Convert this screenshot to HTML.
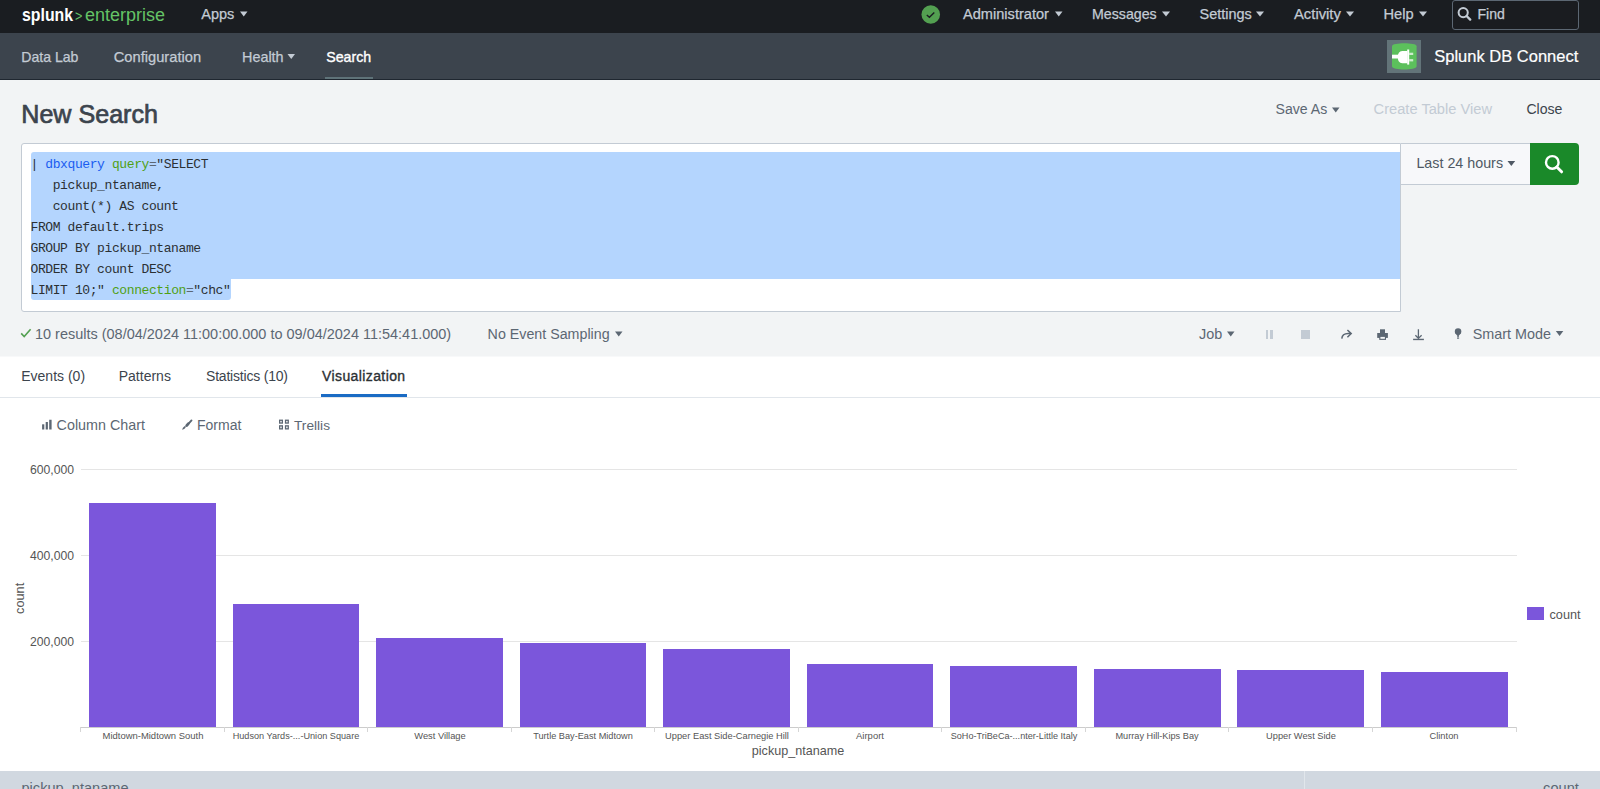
<!DOCTYPE html>
<html><head><meta charset="utf-8"><title>Splunk DB Connect - New Search</title>
<style>
html,body{margin:0;padding:0;width:1600px;height:789px;overflow:hidden;background:#ffffff;}
body{position:relative;font-family:"Liberation Sans",sans-serif;}
.t{position:absolute;white-space:pre;line-height:1;}
.r{position:absolute;}
.mono{font-family:"Liberation Mono",monospace;}
svg.r{display:block;overflow:visible}
</style></head><body>
<div class="r" style="left:0px;top:0px;width:1600px;height:33px;background:#1a1d21;"></div>
<div class="t" style="left:22.00px;top:5.76px;font-size:18px;color:#ffffff;font-weight:bold;transform:scaleX(0.88);transform-origin:0 0;">splunk</div>
<div class="t" style="left:74.80px;top:8.75px;font-size:14px;color:#65c466;transform:scaleX(0.9);transform-origin:0 0;">&gt;</div>
<div class="t" style="left:85.00px;top:6.69px;font-size:17.5px;color:#65c466;transform:scaleX(1.028);transform-origin:0 0;">enterprise</div>
<div class="t" style="left:201.25px;top:7.13px;font-size:14.5px;color:#c3cbd4;-webkit-text-stroke:0.25px #c3cbd4;">Apps</div>
<svg class="r" style="left:0;top:0" width="1" height="1"><polygon points="240,11.5 247.5,11.5 243.75,16.5" fill="#c3cbd4"/></svg>
<svg class="r" style="left:921px;top:4.5px" width="20" height="20" viewBox="0 0 20 20"><circle cx="9.75" cy="9.5" r="9.3" fill="#53a051"/><path d="M5.8 9.9 L8.4 12.3 L13.3 7.4" fill="none" stroke="#1a1d21" stroke-width="1.4"/></svg>
<div class="t" style="left:963.00px;top:7.04px;font-size:14.6px;color:#c3cbd4;-webkit-text-stroke:0.25px #c3cbd4;">Administrator</div>
<svg class="r" style="left:0;top:0" width="1" height="1"><polygon points="1055,11.5 1062.5,11.5 1058.75,16.5" fill="#c3cbd4"/></svg>
<div class="t" style="left:1092.00px;top:7.38px;font-size:14.2px;color:#c3cbd4;-webkit-text-stroke:0.25px #c3cbd4;">Messages</div>
<svg class="r" style="left:0;top:0" width="1" height="1"><polygon points="1162,11.5 1170,11.5 1166.0,16.5" fill="#c3cbd4"/></svg>
<div class="t" style="left:1199.50px;top:7.17px;font-size:14.45px;color:#c3cbd4;-webkit-text-stroke:0.25px #c3cbd4;">Settings</div>
<svg class="r" style="left:0;top:0" width="1" height="1"><polygon points="1256,11.5 1264,11.5 1260.0,16.5" fill="#c3cbd4"/></svg>
<div class="t" style="left:1294.00px;top:6.87px;font-size:14.8px;color:#c3cbd4;-webkit-text-stroke:0.25px #c3cbd4;">Activity</div>
<svg class="r" style="left:0;top:0" width="1" height="1"><polygon points="1346,11.5 1354,11.5 1350.0,16.5" fill="#c3cbd4"/></svg>
<div class="t" style="left:1383.40px;top:6.97px;font-size:14.68px;color:#c3cbd4;-webkit-text-stroke:0.25px #c3cbd4;">Help</div>
<svg class="r" style="left:0;top:0" width="1" height="1"><polygon points="1419,11.5 1427,11.5 1423.0,16.5" fill="#c3cbd4"/></svg>
<div class="r" style="left:1452px;top:0px;width:125px;height:28px;border:1px solid #5c6773;border-radius:3px;background:#1a1c20"></div>
<svg class="r" style="left:1456px;top:5px" width="18" height="18" viewBox="0 0 18 18"><circle cx="7.2" cy="7.6" r="4.6" fill="none" stroke="#c3cbd4" stroke-width="2"/><path d="M10.6 11 L14.2 14.6" stroke="#c3cbd4" stroke-width="2.4" stroke-linecap="round"/></svg>
<div class="t" style="left:1477.50px;top:7.46px;font-size:14.1px;color:#c3cbd4;-webkit-text-stroke:0.25px #c3cbd4;">Find</div>
<div class="r" style="left:0px;top:33px;width:1600px;height:46px;background:#3c444d;"></div>
<div class="r" style="left:0px;top:79px;width:1600px;height:1px;background:#1f2730;"></div>
<div class="t" style="left:21.25px;top:50.06px;font-size:14.1px;color:#c3cbd4;-webkit-text-stroke:0.25px #c3cbd4;">Data Lab</div>
<div class="t" style="left:113.75px;top:49.56px;font-size:14.7px;color:#c3cbd4;-webkit-text-stroke:0.25px #c3cbd4;">Configuration</div>
<div class="t" style="left:242.00px;top:49.81px;font-size:14.4px;color:#c3cbd4;-webkit-text-stroke:0.25px #c3cbd4;">Health</div>
<svg class="r" style="left:0;top:0" width="1" height="1"><polygon points="287.5,54 295.0,54 291.25,59" fill="#c3cbd4"/></svg>
<div class="t" style="left:326.25px;top:49.98px;font-size:14.2px;color:#ffffff;-webkit-text-stroke:0.35px #ffffff;">Search</div>
<div class="r" style="left:325px;top:77px;width:48px;height:2px;background:#5f7379;"></div>
<div class="r" style="left:1387px;top:40px;width:34px;height:33px;background:#637479;"></div>
<svg class="r" style="left:1392px;top:43px" width="25" height="27" viewBox="0 0 25 27"><path d="M0 3.2 C0 -0.6 24.6 -0.6 24.6 3.2 L24.6 23.2 C24.6 27.6 0 27.6 0 23.2 Z" fill="#5cc05c"/><rect x="0" y="11.7" width="7" height="3.8" fill="#fff"/><path d="M15.4 7.9 L10.2 7.9 Q5.8 8.3 5.8 14 Q5.8 19.8 10.2 20.2 L15.4 20.2 Z" fill="#fff"/><rect x="15.2" y="6.5" width="2" height="15.1" fill="#fff"/><rect x="17.2" y="9.7" width="4" height="2.3" fill="#fff" fill-opacity="0.7"/><rect x="17.2" y="16.1" width="4" height="2.3" fill="#fff" fill-opacity="0.7"/></svg>
<div class="t" style="left:1434.25px;top:48.03px;font-size:16.5px;color:#ffffff;-webkit-text-stroke:0.2px #ffffff;">Splunk DB Connect</div>
<div class="r" style="left:0px;top:80px;width:1600px;height:276px;background:#f2f4f5;"></div>
<div class="r" style="left:0px;top:356px;width:1600px;height:1px;background:#f8f9fa;"></div>
<div class="t" style="left:21.30px;top:101.55px;font-size:25.1px;color:#3c444d;-webkit-text-stroke:0.7px #3c444d;">New Search</div>
<div class="t" style="left:1275.60px;top:102.48px;font-size:14.08px;color:#5c6773;">Save As</div>
<svg class="r" style="left:0;top:0" width="1" height="1"><polygon points="1332,107.5 1339.5,107.5 1335.75,112.5" fill="#5c6773"/></svg>
<div class="t" style="left:1373.60px;top:101.99px;font-size:14.66px;color:#c3cbd4;">Create Table View</div>
<div class="t" style="left:1526.40px;top:102.48px;font-size:14.08px;color:#3c444d;">Close</div>
<div class="r" style="left:21px;top:143px;width:1378px;height:167px;border:1px solid #c3cbd4;border-radius:3px 0 0 3px;background:#fff"></div>
<div class="r" style="left:30.5px;top:152.2px;width:1369.5px;height:127.0px;background:#b4d5fe;border-radius:3px 0 0 0;"></div>
<div class="r" style="left:30.5px;top:279.2px;width:200.1px;height:20.80000000000001px;background:#b4d5fe;border-radius:0 0 3px 3px;"></div>
<div class="t mono" style="left:30.5px;top:157.84px;font-size:13.0px;letter-spacing:-0.4px;color:#2b3033"><span style="color:#2b3033">|</span> <span style="color:#1a5cf0">dbxquery</span> <span style="color:#4fa014">query</span><span style="color:#5c6773">=</span>"SELECT</div>
<div class="t mono" style="left:30.5px;top:178.84px;font-size:13.0px;letter-spacing:-0.4px;color:#2b3033">   pickup_ntaname,</div>
<div class="t mono" style="left:30.5px;top:199.84px;font-size:13.0px;letter-spacing:-0.4px;color:#2b3033">   count(*) AS count</div>
<div class="t mono" style="left:30.5px;top:220.84px;font-size:13.0px;letter-spacing:-0.4px;color:#2b3033">FROM default.trips</div>
<div class="t mono" style="left:30.5px;top:241.84px;font-size:13.0px;letter-spacing:-0.4px;color:#2b3033">GROUP BY pickup_ntaname</div>
<div class="t mono" style="left:30.5px;top:262.84px;font-size:13.0px;letter-spacing:-0.4px;color:#2b3033">ORDER BY count DESC</div>
<div class="t mono" style="left:30.5px;top:283.84px;font-size:13.0px;letter-spacing:-0.4px;color:#2b3033">LIMIT 10;" <span style="color:#4fa014">connection</span><span style="color:#5c6773">=</span>"chc"</div>
<div class="r" style="left:1401px;top:143px;width:129px;height:40px;border-top:1px solid #c3cbd4;border-bottom:1px solid #c3cbd4;background:#f7f8fa"></div>
<div class="t" style="left:1416.40px;top:155.80px;font-size:14.3px;color:#4f5964;">Last 24 hours</div>
<svg class="r" style="left:0;top:0" width="1" height="1"><polygon points="1507.5,161 1515.2,161 1511.35,166" fill="#4f5964"/></svg>
<div class="r" style="left:1530px;top:143px;width:49px;height:42px;background:#1a8929;border-radius:0 4px 4px 0"></div>
<svg class="r" style="left:1543px;top:153px" width="22" height="22" viewBox="0 0 22 22"><circle cx="9.3" cy="9.4" r="6.3" fill="none" stroke="#fff" stroke-width="2.4"/><path d="M13.8 14 L18.6 18.8" stroke="#fff" stroke-width="3" stroke-linecap="round"/></svg>
<svg class="r" style="left:20px;top:327px" width="12" height="12" viewBox="0 0 12 12"><path d="M1.2 6.4 L4.2 9.6 L10.6 2.2" fill="none" stroke="#53a051" stroke-width="1.6"/></svg>
<div class="t" style="left:35.00px;top:326.74px;font-size:14.48px;color:#5c6773;">10 results (08/04/2024 11:00:00.000 to 09/04/2024 11:54:41.000)</div>
<div class="t" style="left:487.60px;top:326.94px;font-size:14.25px;color:#5c6773;">No Event Sampling</div>
<svg class="r" style="left:0;top:0" width="1" height="1"><polygon points="615,331.5 622.5,331.5 618.75,336.5" fill="#5c6773"/></svg>
<div class="t" style="left:1199.00px;top:327.29px;font-size:14.42px;color:#5c6773;">Job</div>
<svg class="r" style="left:0;top:0" width="1" height="1"><polygon points="1227,331.5 1234.5,331.5 1230.75,336.5" fill="#5c6773"/></svg>
<div class="r" style="left:1265.5px;top:330.2px;width:2.5px;height:8.600000000000023px;background:#c3cbd4;"></div>
<div class="r" style="left:1270.3px;top:330.2px;width:2.7000000000000455px;height:8.600000000000023px;background:#c3cbd4;"></div>
<div class="r" style="left:1300.5px;top:330px;width:9.5px;height:9px;background:#c3cbd4;"></div>
<svg class="r" style="left:1339px;top:328px" width="15" height="13" viewBox="0 0 15 13"><path d="M2.8 10.6 Q3.2 5.7 9.2 5.6 L12 5.6" fill="none" stroke="#5c6773" stroke-width="1.5"/><path d="M8.4 2.0 L12.2 5.6 L8.4 9.3" fill="none" stroke="#5c6773" stroke-width="1.5"/></svg>
<svg class="r" style="left:1376px;top:329px" width="13" height="12" viewBox="0 0 13 12"><rect x="4" y="0.3" width="5" height="4" fill="#5c6773"/><rect x="1.2" y="4" width="10.7" height="4.9" fill="#5c6773"/><rect x="3.25" y="7" width="6.75" height="3.9" fill="#5c6773"/><rect x="4.4" y="7.9" width="4.5" height="1.9" fill="#f2f4f5"/></svg>
<svg class="r" style="left:1412px;top:329px" width="13" height="12" viewBox="0 0 13 12"><path d="M6.4 0.3 L6.4 9.4 M3.4 6.3 L6.4 9.4 L9.6 6.3" fill="none" stroke="#5c6773" stroke-width="1.3"/><path d="M1.1 10.45 L11.9 10.45" stroke="#5c6773" stroke-width="1.4"/></svg>
<svg class="r" style="left:1454px;top:328px" width="8" height="11" viewBox="0 0 8 11"><circle cx="4.05" cy="3.5" r="3.25" fill="#5c6773"/><path d="M1.1 4.6 L3.1 7.4 L5 7.4 L7 4.6 Z" fill="#5c6773"/><rect x="3.3" y="7" width="1.5" height="2.3" fill="#5c6773"/><rect x="3" y="9.6" width="2.1" height="1.1" fill="#5c6773"/></svg>
<div class="t" style="left:1472.80px;top:326.84px;font-size:14.36px;color:#5c6773;">Smart Mode</div>
<svg class="r" style="left:0;top:0" width="1" height="1"><polygon points="1555.8,331 1563.3,331 1559.55,336" fill="#5c6773"/></svg>
<div class="t" style="left:21.25px;top:369.40px;font-size:14.0px;color:#3c444d;">Events (0)</div>
<div class="t" style="left:118.75px;top:369.40px;font-size:14.0px;color:#3c444d;">Patterns</div>
<div class="t" style="left:206.00px;top:369.40px;font-size:14px;color:#3c444d;letter-spacing:-0.2px;">Statistics (10)</div>
<div class="t" style="left:322.00px;top:369.40px;font-size:14px;color:#2b3033;letter-spacing:0.4px;-webkit-text-stroke:0.35px #2b3033;">Visualization</div>
<div class="r" style="left:321px;top:394px;width:86px;height:3px;background:#1a6bc4;"></div>
<div class="r" style="left:0px;top:397px;width:1600px;height:1px;background:#e1e6eb;"></div>
<svg class="r" style="left:41px;top:419px" width="12" height="12" viewBox="0 0 12 12"><rect x="1.1" y="5.3" width="2.2" height="5.2" fill="#5c6773"/><rect x="4.7" y="3" width="2.2" height="7.5" fill="#5c6773"/><rect x="8.2" y="0.75" width="2.4" height="9.75" fill="#5c6773"/></svg>
<div class="t" style="left:56.60px;top:418.07px;font-size:14.33px;color:#5c6773;">Column Chart</div>
<svg class="r" style="left:176px;top:412px" width="24" height="24" viewBox="0 0 24 24"><path d="M15.5 8.4 L11.3 13.1" stroke="#5c6773" stroke-width="1.9" stroke-linecap="round"/><path d="M12.3 11.6 L10.6 13.6" stroke="#5c6773" stroke-width="2.6" stroke-linecap="round"/><path d="M9.9 14.3 Q9.6 16.9 6.1 17.7 Q6.6 15.3 8.4 14.2 Z" fill="#5c6773"/></svg>
<div class="t" style="left:197.00px;top:418.33px;font-size:14.02px;color:#5c6773;">Format</div>
<svg class="r" style="left:278px;top:419px" width="12" height="12" viewBox="0 0 12 12"><rect x="1.65" y="1.25" width="2.7" height="2.8" fill="none" stroke="#5c6773" stroke-width="1.3"/><rect x="7.55" y="1.25" width="2.7" height="2.8" fill="none" stroke="#5c6773" stroke-width="1.3"/><rect x="1.65" y="6.85" width="2.7" height="3" fill="none" stroke="#5c6773" stroke-width="1.3"/><rect x="7.55" y="6.85" width="2.7" height="3" fill="none" stroke="#5c6773" stroke-width="1.3"/></svg>
<div class="t" style="left:294.00px;top:418.61px;font-size:13.69px;color:#5c6773;">Trellis</div>
<div class="r" style="left:80.5px;top:469px;width:1436.0px;height:1px;background:#e5e5e5;"></div>
<div class="t" style="right:1526.00px;top:464.17px;font-size:12.2px;color:#555555;">600,000</div>
<div class="r" style="left:80.5px;top:555px;width:1436.0px;height:1px;background:#e5e5e5;"></div>
<div class="t" style="right:1526.00px;top:550.47px;font-size:12.2px;color:#555555;">400,000</div>
<div class="r" style="left:80.5px;top:641px;width:1436.0px;height:1px;background:#e5e5e5;"></div>
<div class="t" style="right:1526.00px;top:636.17px;font-size:12.2px;color:#555555;">200,000</div>
<div class="r" style="left:80px;top:727px;width:1437px;height:1px;background:#cccccc;"></div>
<div class="r" style="left:80px;top:727px;width:1px;height:5px;background:#d6d6d6;"></div>
<div class="r" style="left:224px;top:727px;width:1px;height:5px;background:#d6d6d6;"></div>
<div class="r" style="left:367px;top:727px;width:1px;height:5px;background:#d6d6d6;"></div>
<div class="r" style="left:511px;top:727px;width:1px;height:5px;background:#d6d6d6;"></div>
<div class="r" style="left:654px;top:727px;width:1px;height:5px;background:#d6d6d6;"></div>
<div class="r" style="left:798px;top:727px;width:1px;height:5px;background:#d6d6d6;"></div>
<div class="r" style="left:941px;top:727px;width:1px;height:5px;background:#d6d6d6;"></div>
<div class="r" style="left:1085px;top:727px;width:1px;height:5px;background:#d6d6d6;"></div>
<div class="r" style="left:1228px;top:727px;width:1px;height:5px;background:#d6d6d6;"></div>
<div class="r" style="left:1372px;top:727px;width:1px;height:5px;background:#d6d6d6;"></div>
<div class="r" style="left:1516px;top:727px;width:1px;height:5px;background:#d6d6d6;"></div>
<div class="r" style="left:89.20px;top:502.6px;width:126.7px;height:224.40px;background:#7b56db"></div>
<div class="t" style="left:-147.45px;width:600px;text-align:center;top:731.04px;font-size:9.4px;color:#555555;transform:scaleX(1.0085);transform-origin:300px 0;">Midtown-Midtown South</div>
<div class="r" style="left:232.72px;top:604.1px;width:126.7px;height:122.90px;background:#7b56db"></div>
<div class="t" style="left:-3.93px;width:600px;text-align:center;top:731.04px;font-size:9.4px;color:#555555;transform:scaleX(0.9745);transform-origin:300px 0;">Hudson Yards-...-Union Square</div>
<div class="r" style="left:376.24px;top:638px;width:126.7px;height:89.00px;background:#7b56db"></div>
<div class="t" style="left:139.59px;width:600px;text-align:center;top:731.04px;font-size:9.4px;color:#555555;transform:scaleX(0.9947);transform-origin:300px 0;">West Village</div>
<div class="r" style="left:519.76px;top:643.4px;width:126.7px;height:83.60px;background:#7b56db"></div>
<div class="t" style="left:283.11px;width:600px;text-align:center;top:731.04px;font-size:9.4px;color:#555555;transform:scaleX(0.9787);transform-origin:300px 0;">Turtle Bay-East Midtown</div>
<div class="r" style="left:663.28px;top:648.5px;width:126.7px;height:78.50px;background:#7b56db"></div>
<div class="t" style="left:426.63px;width:600px;text-align:center;top:731.04px;font-size:9.4px;color:#555555;transform:scaleX(0.9904);transform-origin:300px 0;">Upper East Side-Carnegie Hill</div>
<div class="r" style="left:806.80px;top:663.5px;width:126.7px;height:63.50px;background:#7b56db"></div>
<div class="t" style="left:570.15px;width:600px;text-align:center;top:731.04px;font-size:9.4px;color:#555555;transform:scaleX(1.0096);transform-origin:300px 0;">Airport</div>
<div class="r" style="left:950.32px;top:665.6px;width:126.7px;height:61.40px;background:#7b56db"></div>
<div class="t" style="left:713.67px;width:600px;text-align:center;top:731.04px;font-size:9.4px;color:#555555;transform:scaleX(0.9702);transform-origin:300px 0;">SoHo-TriBeCa-...nter-Little Italy</div>
<div class="r" style="left:1093.84px;top:669px;width:126.7px;height:58.00px;background:#7b56db"></div>
<div class="t" style="left:857.19px;width:600px;text-align:center;top:731.04px;font-size:9.4px;color:#555555;transform:scaleX(0.9798);transform-origin:300px 0;">Murray Hill-Kips Bay</div>
<div class="r" style="left:1237.36px;top:669.7px;width:126.7px;height:57.30px;background:#7b56db"></div>
<div class="t" style="left:1000.71px;width:600px;text-align:center;top:731.04px;font-size:9.4px;color:#555555;transform:scaleX(0.9872);transform-origin:300px 0;">Upper West Side</div>
<div class="r" style="left:1380.88px;top:671.7px;width:126.7px;height:55.30px;background:#7b56db"></div>
<div class="t" style="left:1144.23px;width:600px;text-align:center;top:731.04px;font-size:9.4px;color:#555555;transform:scaleX(0.9915);transform-origin:300px 0;">Clinton</div>
<div class="t" style="left:498.00px;width:600px;text-align:center;top:745.33px;font-size:12.6px;color:#555555;">pickup_ntaname</div>
<div class="t" style="left:-280px;width:600px;text-align:center;top:591.5px;font-size:12.7px;color:#555555;transform:rotate(-90deg);transform-origin:300px 6.35px;">count</div>
<div class="r" style="left:1527px;top:607px;width:17px;height:13px;background:#7b56db;"></div>
<div class="t" style="left:1549.50px;top:609.25px;font-size:12.7px;color:#555555;">count</div>
<div class="r" style="left:0px;top:771px;width:1600px;height:18px;background:#d1d8e0;"></div>
<div class="r" style="left:1304px;top:771px;width:1px;height:18px;background:#e1e6eb;"></div>
<div class="t" style="left:21.50px;top:781.14px;font-size:14.6px;color:#5c6773;">pickup_ntaname</div>
<div class="t" style="right:21.20px;top:781.14px;font-size:14.6px;color:#5c6773;">count</div>
</body></html>
